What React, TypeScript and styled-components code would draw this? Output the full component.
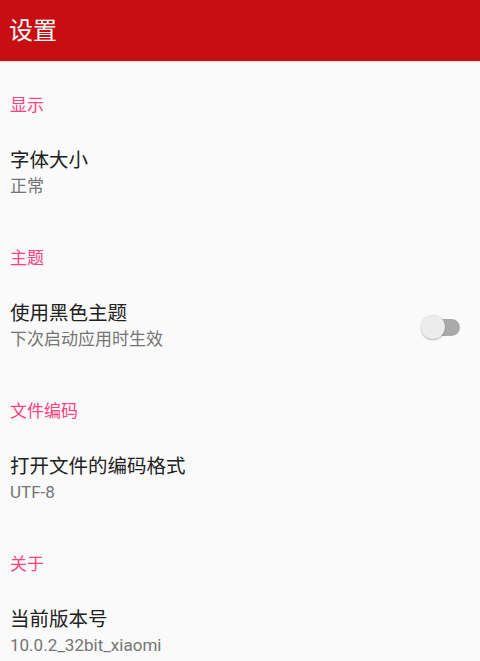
import styled, { createGlobalStyle } from "styled-components";

const GlobalStyle = createGlobalStyle`
  html, body {
    margin: 0;
    padding: 0;
    background: #fafafa;
  }
  body {
    font-family: Roboto, "Noto Sans CJK SC", sans-serif;
  }
`;

const Page = styled.div`
  width: 480px;
  height: 661px;
  overflow: hidden;
  background: #fafafa;
`;

const AppBar = styled.header`
  height: 61px;
  display: flex;
  align-items: center;
  padding: 0 9px;
  background-color: #c70f12;
  box-shadow: 0 1px 2px rgba(0, 0, 0, 0.15);
`;

const Title = styled.h1`
  margin: 0;
  font-size: 24px;
  font-weight: 400;
  color: #fff;
  padding-bottom: 4px;
`;

const Category = styled.div`
  padding: 31px 10px 0;
  font-size: 17px;
  line-height: 26px;
  color: #ff4081;
`;

const Item = styled.div`
  display: flex;
  align-items: center;
  padding: 30px 20px 16px 10px;
`;

const ItemText = styled.div`
  flex: 1;
  display: flex;
  flex-direction: column;
`;

const ItemTitle = styled.div`
  font-size: 19.5px;
  line-height: 26px;
  color: #212121;
`;

const Summary = styled.div`
  font-size: 17px;
  line-height: 24px;
  color: #757575;
`;

const SwitchTrack = styled.div<{ $on: boolean }>`
  position: relative;
  width: 32px;
  height: 17px;
  border-radius: 9px;
  margin-top: 2px;
  background: ${(p) => (p.$on ? "#ff80ab" : "#aaaaaa")};
`;

const SwitchThumb = styled.div<{ $on: boolean }>`
  position: absolute;
  top: 50%;
  left: ${(p) => (p.$on ? "20px" : "-7px")};
  width: 24px;
  height: 24px;
  margin-top: -12px;
  border-radius: 50%;
  background: ${(p) => (p.$on ? "#ff4081" : "#ececec")};
  box-shadow: 0 1px 2px rgba(0, 0, 0, 0.25), 0 0 1px rgba(0, 0, 0, 0.12);
`;

type Pref = { title: string; summary: string; toggle?: boolean };

const sections: { header: string; items: Pref[] }[] = [
  { header: "显示", items: [{ title: "字体大小", summary: "正常" }] },
  {
    header: "主题",
    items: [{ title: "使用黑色主题", summary: "下次启动应用时生效", toggle: false }],
  },
  { header: "文件编码", items: [{ title: "打开文件的编码格式", summary: "UTF-8" }] },
  { header: "关于", items: [{ title: "当前版本号", summary: "10.0.2_32bit_xiaomi" }] },
];

export default function App() {
  return (
    <Page>
      <GlobalStyle />
      <AppBar>
        <Title>设置</Title>
      </AppBar>
      {sections.map((s) => (
        <section key={s.header}>
          <Category>{s.header}</Category>
          {s.items.map((it) => (
            <Item key={it.title}>
              <ItemText>
                <ItemTitle>{it.title}</ItemTitle>
                <Summary>{it.summary}</Summary>
              </ItemText>
              {it.toggle !== undefined && (
                <SwitchTrack $on={it.toggle}>
                  <SwitchThumb $on={it.toggle} />
                </SwitchTrack>
              )}
            </Item>
          ))}
        </section>
      ))}
    </Page>
  );
}
